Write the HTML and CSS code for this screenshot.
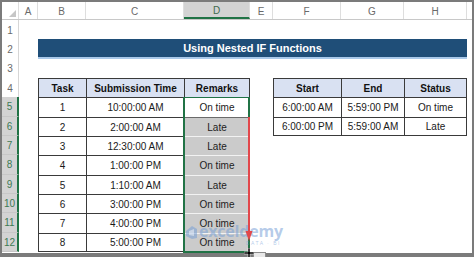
FILE: index.html
```html
<!DOCTYPE html>
<html>
<head>
<meta charset="utf-8">
<link rel="stylesheet" href="styles.css">
</head>
<body>
<div class="screen">
  <div class="sheet">
    <div class="row hdr">
      <div class="ch corner"><span class="tri"></span></div>
      <div class="ch">A</div>
      <div class="ch">B</div>
      <div class="ch">C</div>
      <div class="ch sel">D</div>
      <div class="ch">E</div>
      <div class="ch">F</div>
      <div class="ch">G</div>
      <div class="ch">H</div>
      <div class="ch end"></div>
    </div>
    <div class="row"><div class="rh">1</div></div>
    <div class="row"><div class="rh">2</div><div class="title">Using Nested IF Functions</div></div>
    <div class="row"><div class="rh">3</div></div>
    <div class="row">
      <div class="rh">4</div>
      <div class="c th colB">Task</div><div class="c th">Submission Time</div><div class="c th r">Remarks</div>
      <div class="c th colF">Start</div><div class="c th">End</div><div class="c th r">Status</div>
    </div>
    <div class="row">
      <div class="rh sel">5</div>
      <div class="c colB">1</div><div class="c">10:00:00 AM</div><div class="c r act">On time</div>
      <div class="c colF">6:00:00 AM</div><div class="c">5:59:00 PM</div><div class="c r">On time</div>
    </div>
    <div class="row">
      <div class="rh sel">6</div>
      <div class="c colB">2</div><div class="c">2:00:00 AM</div><div class="c r s first">Late</div>
      <div class="c colF bt">6:00:00 PM</div><div class="c bt">5:59:00 AM</div><div class="c r bt">Late</div>
    </div>
    <div class="row">
      <div class="rh sel">7</div>
      <div class="c colB">3</div><div class="c">12:30:00 AM</div><div class="c r s">Late</div>
    </div>
    <div class="row">
      <div class="rh sel">8</div>
      <div class="c colB">4</div><div class="c">1:00:00 PM</div><div class="c r s">On time</div>
    </div>
    <div class="row">
      <div class="rh sel">9</div>
      <div class="c colB">5</div><div class="c">1:10:00 AM</div><div class="c r s">Late</div>
    </div>
    <div class="row">
      <div class="rh sel">10</div>
      <div class="c colB">6</div><div class="c">3:00:00 PM</div><div class="c r s">On time</div>
    </div>
    <div class="row">
      <div class="rh sel">11</div>
      <div class="c colB">7</div><div class="c">4:00:00 PM</div><div class="c r s">On time</div>
    </div>
    <div class="row">
      <div class="rh sel">12</div>
      <div class="c colB bt">8</div><div class="c bt">5:00:00 PM</div><div class="c r s bt">On time</div>
    </div>
  </div>

  <div class="selbox"></div>

  <div class="wm">
    <svg class="wm-logo" width="13" height="15" viewBox="0 0 13 15">
      <path d="M1 6 L7 1 L12 4 L12 13 L7 14 L1 11 Z" fill="currentColor"/>
      <path d="M4 6 L9 4 L9 11 L4 10 Z" fill="#ffffff" opacity="0.45"/>
    </svg>
    <div class="wm-text">
      <span class="wm-name">exceldemy</span>
      <span class="wm-sub">DATA · BI</span>
    </div>
  </div>

  <svg class="arrow" width="10" height="126" viewBox="0 0 10 126">
    <line x1="5" y1="0" x2="5" y2="116" stroke="#e2474b" stroke-width="2"/>
    <path d="M1.5 114 L8.5 114 L5 124 Z" fill="#e2474b"/>
  </svg>

  <div class="fillbox"></div>

  <svg class="cross" width="10" height="10" viewBox="0 0 10 10">
    <path d="M4 0h2v4h4v2H6v4H4V6H0V4h4z" fill="#000" stroke="#fff" stroke-width="0.5"/>
  </svg>
</div>
</body>
</html>
```

FILE: styles.css
```css
* {
  box-sizing: border-box;
  margin: 0;
  padding: 0;
}

body {
  width: 474px;
  height: 257px;
  overflow: hidden;
  background: #7b7b7b;
  font-family: "Liberation Sans", Arial, sans-serif;
}

.screen {
  position: relative;
  width: 474px;
  height: 257px;
  padding: 2px 0 0 2px;
}

.sheet {
  width: 470px;
  height: 251px;
  background: #ffffff;
  overflow: hidden;
}

.row {
  display: grid;
  grid-template-columns: 17px 19px 48px 98px 66px 23px 68px 63px 63px 1fr;
  height: 19.33px;
}

.hdr {
  height: 18px;
  border-bottom: 1px solid #c8c8c8;
}

.ch {
  display: flex;
  align-items: center;
  justify-content: center;
  font-size: 10px;
  color: #6a6a6a;
  border-right: 1px solid #dedede;
  padding-top: 1px;
}

.ch.sel {
  background: #d3d3d3;
  color: #3d6a4e;
  border-bottom: 2px solid #217346;
}

.ch.end {
  border-right: none;
}

.corner {
  justify-content: flex-end;
  align-items: flex-end;
  padding: 0 2px 2px 0;
}

.tri {
  width: 0;
  height: 0;
  border-left: 7px solid transparent;
  border-bottom: 7px solid #c6c6c6;
}

.rh {
  grid-column: 1;
  display: flex;
  align-items: center;
  justify-content: center;
  font-size: 10px;
  color: #6a6a6a;
  border-right: 1px solid #d6d6d6;
  padding-top: 1px;
}

.rh.sel {
  background: #d3d3d3;
  color: #3e7a54;
  border-right: 2px solid #217346;
  border-bottom: 1px solid #c7c7c7;
}

.title {
  grid-column: 3 / 10;
  display: flex;
  align-items: center;
  justify-content: center;
  background: #1f4e78;
  border-bottom: 2px solid #a9c9ea;
  color: #ffffff;
  font-weight: bold;
  font-size: 11px;
  padding-top: 1px;
}

.c {
  display: flex;
  align-items: center;
  justify-content: center;
  font-size: 10px;
  color: #1a1a1a;
  border-left: 1px solid #3a3a3a;
  border-top: 1px solid #3a3a3a;
  padding-top: 1px;
  white-space: nowrap;
}

.c.r {
  border-right: 1px solid #3a3a3a;
}

.c.bt {
  border-bottom: 1px solid #3a3a3a;
}

.colB {
  grid-column: 3;
}

.colF {
  grid-column: 7;
}

.th {
  background: #d9e1f2;
  font-weight: bold;
  color: #111111;
}

.c.act {
  background: #ffffff;
}

.c.s {
  background: #cbcbcb;
  border-top-color: #f2f2f2;
  color: #222222;
}

.c.s.first {
  border-top-color: #6a6a6a;
}

.selbox {
  position: absolute;
  left: 183px;
  top: 97px;
  width: 67px;
  height: 156px;
  border: 2px solid #217346;
  border-top-width: 1px;
}

.wm {
  position: absolute;
  left: 185px;
  top: 223px;
  display: flex;
  align-items: flex-start;
  gap: 1px;
  color: rgba(120, 160, 215, 0.55);
}

.wm-logo {
  margin-top: 2px;
}

.wm-text {
  display: flex;
  flex-direction: column;
  align-items: flex-end;
}

.wm-name {
  font-family: "Open Sans", "Liberation Sans", sans-serif;
  font-weight: bold;
  font-size: 16px;
  line-height: 17px;
  letter-spacing: -0.2px;
}

.wm-sub {
  font-size: 5px;
  line-height: 6px;
  letter-spacing: 1.5px;
  margin-right: 2px;
}

.arrow {
  position: absolute;
  left: 244px;
  top: 117px;
}

.fillbox {
  position: absolute;
  left: 253px;
  top: 252px;
  width: 13px;
  height: 7px;
  background: #e8e8e8;
  border: 1px solid #8c8c8c;
}

.cross {
  position: absolute;
  left: 244px;
  top: 248px;
}
```
